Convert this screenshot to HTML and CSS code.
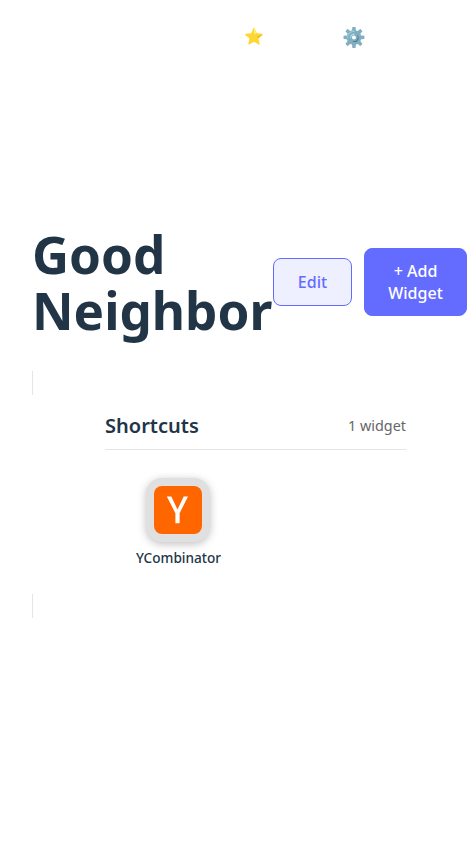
FILE: index.html
```html
<!DOCTYPE html>
<html lang="en">
<head>
<meta charset="utf-8">
<title>Good Neighbor</title>
<link rel="stylesheet" href="styles.css">
</head>
<body>
<nav class="toolbar"><span class="star">⭐</span><span class="gear">⚙️</span></nav>
<main class="page">
<header class="header">
<h1>Good Neighbor</h1>
<div class="actions"><button class="btn edit">Edit</button><button class="btn add">+ Add Widget</button></div>
</header>
<div class="tick"></div>
<section class="group">
<div class="group-head"><h2>Shortcuts</h2><span class="count">1 widget</span></div>
<a class="shortcut"><span class="tile"><svg width="48" height="48" viewBox="0 0 48 48"><rect width="48" height="48" rx="8" fill="#f60"/><path d="M12.8 10.5H17.3L23.5 23.4L29.7 10.5H34L25.6 27.2V37.3H21.4V27.2Z" fill="#fff"/></svg></span><span class="name">YCombinator</span></a>
</section>
<div class="tick"></div>
</main>
</body>
</html>
```
FILE: styles.css
```css
* { box-sizing: border-box; }
body { margin: 0; background: #fff; color: #213547; font-family: "Noto Sans", sans-serif; overflow: hidden; }
.toolbar { display: flex; height: 74px; padding-left: 244px; align-items: center; }
.star { width: 98px; font-size: 16px; line-height: 24px; padding-bottom: 2px; }
.gear { font-size: 19.2px; line-height: 24px; }
.page { padding: 152px 0 0 32px; }
.header { display: flex; align-items: center; height: 112px; }
h1 { margin: 0; width: 241px; font-size: 51.2px; line-height: 56px; font-weight: 700; }
.actions { display: flex; gap: 12px; align-items: center; }
.btn { font: 500 16px/22px "Noto Sans", sans-serif; border: 1px solid #646cff; border-radius: 8px; padding: 12px 0; }
.edit { width: 79px; height: 48px; color: #646cff; background: #eeefff; }
.add { width: 103px; height: 68px; color: #fff; background: #646cff; padding: 11px 20px; }
.tick { width: 1px; height: 24px; background: #e5e5e5; }
.header + .tick { margin-top: 33px; }
.group { width: 301px; height: 199px; margin-left: 73px; padding-top: 15px; }
.group-head { display: flex; justify-content: space-between; align-items: center; height: 40px; padding-bottom: 8px; border-bottom: 1px solid #e5e5e5; }
h2 { margin: 0; font-size: 20px; line-height: 30px; font-weight: 600; letter-spacing: 0.02px; }
.count { font-size: 14.4px; color: #666; }
.shortcut { display: flex; flex-direction: column; align-items: center; width: 147px; margin-top: 28px; }
.tile { width: 64px; height: 64px; margin-right: 1px; padding: 8px; border-radius: 16px; background: #e0e0e0; box-shadow: 0 2px 8px rgba(0,0,0,.25); }
.tile svg { display: block; }
.name { margin-top: 6px; font-size: 13.6px; line-height: 20px; font-weight: 500; }
```
